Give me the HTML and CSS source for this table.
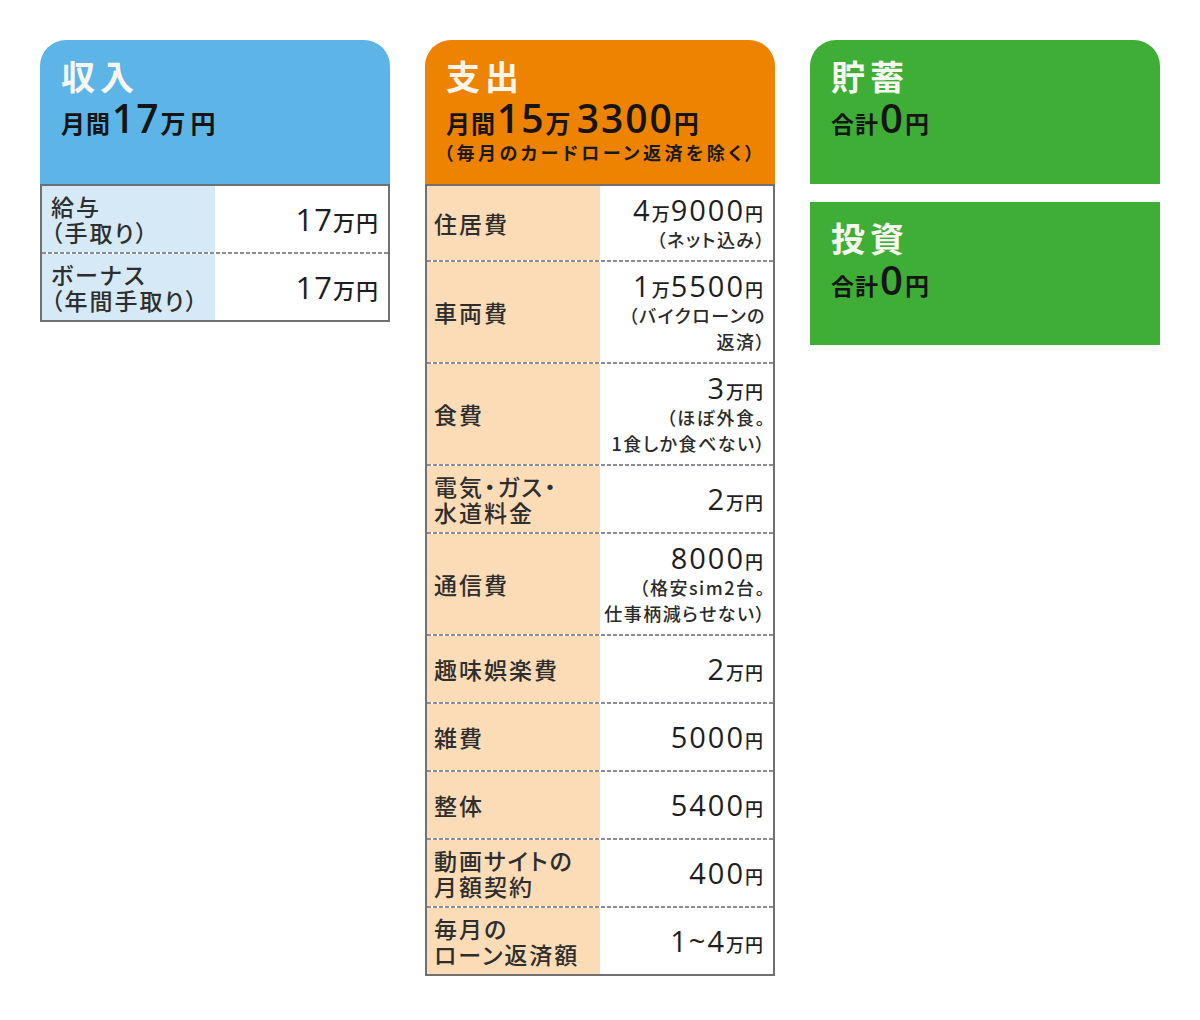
FILE: index.html
```html
<!DOCTYPE html>
<html lang="ja">
<head>
<meta charset="utf-8">
<title>収支</title>
<link rel="stylesheet" href="styles.css">
</head>
<body>
<div class="board">
  <section class="col">
    <header class="head head-blue">
      <h2 class="title">収入</h2>
      <p class="amount"><span class="pre">月間</span><span class="big">17</span><span class="unit">万円</span></p>
    </header>
    <div class="table">
      <div class="row">
        <div class="label label-blue">給与<br>（手取り）</div>
        <div class="value value-lg"><span class="main"><span class="n">17</span><span class="u">万円</span></span></div>
      </div>
      <div class="row">
        <div class="label label-blue">ボーナス<br>（年間手取り）</div>
        <div class="value value-lg"><span class="main"><span class="n">17</span><span class="u">万円</span></span></div>
      </div>
    </div>
  </section>

  <section class="col">
    <header class="head head-orange">
      <h2 class="title">支出</h2>
      <p class="amount"><span class="pre">月間</span><span class="big">15</span><span class="unit">万</span><span class="big">3300</span><span class="unit">円</span></p>
      <p class="subnote">（毎月のカードローン返済を除く）</p>
    </header>
    <div class="table">
      <div class="row">
        <div class="label label-peach">住居費</div>
        <div class="value"><span class="main"><span class="n">4</span><span class="u">万</span><span class="n">9000</span><span class="u">円</span></span><span class="note">（ネット込み）</span></div>
      </div>
      <div class="row">
        <div class="label label-peach">車両費</div>
        <div class="value"><span class="main"><span class="n">1</span><span class="u">万</span><span class="n">5500</span><span class="u">円</span></span><span class="note">（バイクローンの<br>返済）</span></div>
      </div>
      <div class="row">
        <div class="label label-peach">食費</div>
        <div class="value"><span class="main"><span class="n">3</span><span class="u">万円</span></span><span class="note">（ほぼ外食。<br>1食しか食べない）</span></div>
      </div>
      <div class="row">
        <div class="label label-peach">電気・ガス・<br>水道料金</div>
        <div class="value"><span class="main"><span class="n">2</span><span class="u">万円</span></span></div>
      </div>
      <div class="row">
        <div class="label label-peach">通信費</div>
        <div class="value"><span class="main"><span class="n">8000</span><span class="u">円</span></span><span class="note">（格安sim2台。<br>仕事柄減らせない）</span></div>
      </div>
      <div class="row">
        <div class="label label-peach">趣味娯楽費</div>
        <div class="value"><span class="main"><span class="n">2</span><span class="u">万円</span></span></div>
      </div>
      <div class="row">
        <div class="label label-peach">雑費</div>
        <div class="value"><span class="main"><span class="n">5000</span><span class="u">円</span></span></div>
      </div>
      <div class="row">
        <div class="label label-peach">整体</div>
        <div class="value"><span class="main"><span class="n">5400</span><span class="u">円</span></span></div>
      </div>
      <div class="row">
        <div class="label label-peach">動画サイトの<br>月額契約</div>
        <div class="value"><span class="main"><span class="n">400</span><span class="u">円</span></span></div>
      </div>
      <div class="row">
        <div class="label label-peach">毎月の<br>ローン返済額</div>
        <div class="value"><span class="main"><span class="n">1~4</span><span class="u">万円</span></span></div>
      </div>
    </div>
  </section>

  <section class="col col-green">
    <header class="head head-green">
      <h2 class="title">貯蓄</h2>
      <p class="amount amount-sm"><span class="pre">合計</span><span class="big">0</span><span class="unit">円</span></p>
    </header>
    <div class="head head-green head-flat">
      <h2 class="title">投資</h2>
      <p class="amount amount-sm"><span class="pre">合計</span><span class="big">0</span><span class="unit">円</span></p>
    </div>
  </section>
</div>
</body>
</html>
```

FILE: styles.css
```css
* { box-sizing: border-box; }
html, body { margin: 0; padding: 0; background: #ffffff; }
body {
  font-family: "Noto Sans CJK JP", "Noto Sans", sans-serif;
  color: #222;
  font-feature-settings: "palt";
}
.board {
  display: flex;
  align-items: flex-start;
  gap: 35px;
  padding: 40px 0 0 40px;
}
.col {
  width: 350px;
  display: flex;
  flex-direction: column;
}
.col-green { gap: 18px; }

.head {
  height: 144px;
  border-radius: 26px 26px 0 0;
  padding: 14px 20px 0 21px;
}
.head-flat { border-radius: 0; height: 143px; }
.head-blue { background: #5db4e6; }
.head-orange { background: #ee8302; }
.head-green { background: #3eae36; }

.title {
  margin: 0;
  font-size: 34px;
  line-height: 44px;
  font-weight: 700;
  color: #f7f7f0;
  letter-spacing: 5px;
}
.amount {
  margin: 0;
  height: 42px;
  display: flex;
  align-items: baseline;
  color: #151515;
  font-weight: 700;
  white-space: nowrap;
}
.amount span { line-height: 40px; }
.amount .pre { font-size: 24px; letter-spacing: 1px; }
.amount .big {
  font-family: "Open Sans", "Noto Sans", sans-serif;
  font-size: 39px;
  font-weight: 600;
  letter-spacing: 2px;
  margin-left: 1px;
}
.amount .unit { font-size: 25px; letter-spacing: 5px; }
.amount-sm .pre { font-size: 23px; letter-spacing: 1px; }
.amount-sm .big { font-size: 40px; letter-spacing: 0; margin: 0 2px 0 1px; }
.amount-sm .unit { font-size: 24px; letter-spacing: 0; }
.subnote {
  margin: 0;
  font-size: 18px;
  line-height: 24px;
  font-weight: 700;
  color: #1a1a1a;
  letter-spacing: 3.5px;
  margin-left: -2px;
  white-space: nowrap;
}

.table {
  border: 2px solid #707070;
  background: #ffffff;
}
.row {
  display: grid;
  grid-template-columns: 173px 1fr;
  min-height: 66px;
}
.row + .row {
  padding-top: 2px;
  min-height: 68px;
  background: repeating-linear-gradient(90deg, #8c8c94 0 4px, transparent 4px 6px) top left / 100% 2px no-repeat;
}
.label {
  display: flex;
  align-items: center;
  padding: 2px 6px 2px 7px;
  font-size: 23px;
  line-height: 26px;
  font-weight: 500;
  letter-spacing: 2px;
  color: #2e2e2e;
}
.label-blue { background: #d6e9f6; padding-left: 9px; }
.label-peach { background: #fcdcb7; }

.value {
  display: flex;
  flex-direction: column;
  justify-content: center;
  align-items: flex-end;
  text-align: right;
  padding: 8px 9px 8px 4px;
  color: #1e1e1e;
}
.main {
  display: flex;
  align-items: baseline;
  height: 32px;
  white-space: nowrap;
}
.main span { line-height: 32px; }
.main .n {
  font-family: "Open Sans", "Noto Sans", sans-serif;
  font-size: 29px;
  font-weight: 500;
  letter-spacing: 2px;
}
.main .u { font-size: 18px; font-weight: 500; letter-spacing: 1px; }
.value-lg .main .n { font-size: 31px; letter-spacing: 1px; }
.value-lg .main .u { font-size: 22px; letter-spacing: 1px; }
.note {
  font-size: 18px;
  line-height: 26px;
  font-weight: 500;
  color: #2a2a2a;
  letter-spacing: 1.5px;
  margin-right: -2px;
  white-space: nowrap;
}
```
